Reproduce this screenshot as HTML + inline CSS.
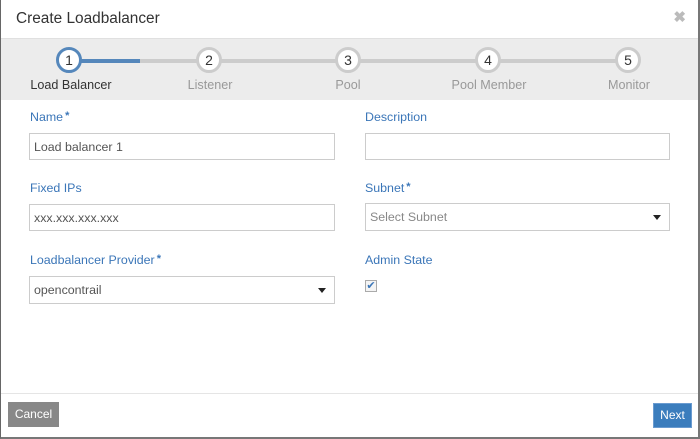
<!DOCTYPE html>
<html><head><style>
*{box-sizing:border-box;margin:0;padding:0}
body{width:700px;height:439px;background:#fff;font-family:"Liberation Sans",sans-serif;position:relative;overflow:hidden}
.frame{position:absolute;left:0;top:0;width:700px;height:439px;border-left:1px solid #666;border-right:2px solid #777;border-bottom:2px solid #777}
.abs{position:absolute}
.title{left:16px;top:10px;font-size:15.4px;color:#333}
.x{right:14px;top:8px;font-size:15px;color:#bbb;font-weight:bold}
.band{left:1px;top:38px;width:697px;height:62px;background:#ececec;border-top:1px solid #e0e0e0}
.circ{width:26px;height:26px;border-radius:50%;border:3px solid #ccc;background:#fff;text-align:center;line-height:20px;font-size:14px;color:#333}
.lbl{font-size:12.6px;color:#999;text-align:center;width:120px}
.fl{font-size:12.4px;color:#3b76b8}
.fl b{font-size:11px;vertical-align:top;margin-left:2px}
.inp{border:1px solid #ccc;height:27px;font-size:12.4px;color:#555;padding:6px 4px}
.arr{position:absolute;right:8px;top:11px;border-left:4px solid transparent;border-right:4px solid transparent;border-top:5px solid #222}
.btn{font-size:12px;color:#fff;text-align:center;line-height:25px;height:25px}
</style></head><body>
<div class="frame"></div>
<div class="abs title">Create Loadbalancer</div>
<div class="abs x">✖</div>
<div class="abs band"></div>
<div class="abs" style="left:69px;top:59px;width:560px;height:4px;background:#ccc"></div>
<div class="abs" style="left:69px;top:59px;width:71px;height:4px;background:#5587bb"></div>
<div class="abs circ" style="left:56px;top:47px;border-color:#5587bb">1</div>
<div class="abs circ" style="left:196px;top:47px">2</div>
<div class="abs circ" style="left:335px;top:47px">3</div>
<div class="abs circ" style="left:475px;top:47px">4</div>
<div class="abs circ" style="left:615px;top:47px">5</div>
<div class="abs lbl" style="left:11px;top:78px;color:#333">Load Balancer</div>
<div class="abs lbl" style="left:150px;top:78px">Listener</div>
<div class="abs lbl" style="left:288px;top:78px">Pool</div>
<div class="abs lbl" style="left:429px;top:78px">Pool Member</div>
<div class="abs lbl" style="left:569px;top:78px">Monitor</div>

<div class="abs fl" style="left:30px;top:110px">Name<b>*</b></div>
<div class="abs inp" style="left:29px;top:133px;width:306px">Load balancer 1</div>
<div class="abs fl" style="left:365px;top:110px">Description</div>
<div class="abs inp" style="left:365px;top:133px;width:305px"></div>

<div class="abs fl" style="left:30px;top:181px">Fixed IPs</div>
<div class="abs inp" style="left:29px;top:204px;width:306px">xxx.xxx.xxx.xxx</div>
<div class="abs fl" style="left:365px;top:181px">Subnet<b>*</b></div>
<div class="abs inp" style="left:365px;top:203px;width:305px;height:28px;color:#888">Select Subnet<span class="arr"></span></div>

<div class="abs fl" style="left:30px;top:253px">Loadbalancer Provider<b>*</b></div>
<div class="abs inp" style="left:29px;top:276px;width:306px;height:28px">opencontrail<span class="arr"></span></div>
<div class="abs fl" style="left:365px;top:253px">Admin State</div>
<div class="abs" style="left:365px;top:280px;width:12px;height:12px;border:1px solid #aaa;background:#f4f4f4;color:#3b76b8;font-size:11px;line-height:10px;text-align:center">✔</div>

<div class="abs" style="left:1px;top:393px;width:697px;height:1px;background:#e5e5e5"></div>
<div class="abs btn" style="left:8px;top:402px;width:51px;background:#888">Cancel</div>
<div class="abs btn" style="left:653px;top:403px;width:39px;background:#3b7dbd;border:1px solid #6a9bd0;line-height:23px">Next</div>
</body></html>
